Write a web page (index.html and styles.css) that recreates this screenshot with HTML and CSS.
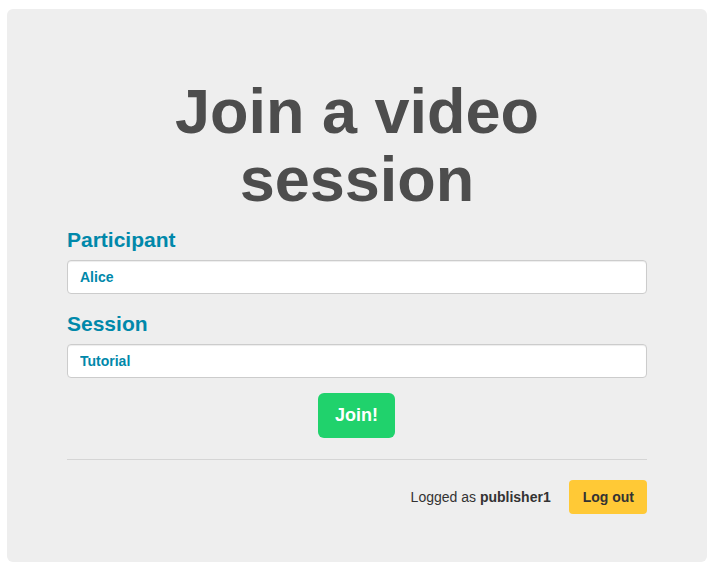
FILE: index.html
```html
<!DOCTYPE html>
<html>
<head>
<meta charset="utf-8">
<link rel="stylesheet" href="styles.css">
</head>
<body>
<div class="page">
  <div class="jumbotron">
    <h1 class="title">Join a video session</h1>
    <form class="form">
      <label class="label">Participant</label>
      <input class="input" type="text" value="Alice">
      <label class="label">Session</label>
      <input class="input" type="text" value="Tutorial">
      <div class="center"><button class="btn-join" type="button">Join!</button></div>
    </form>
    <hr class="rule">
    <div class="logged">
      <span class="logged-text">Logged as <b>publisher1</b></span>
      <button class="btn-logout" type="button">Log out</button>
    </div>
  </div>
</div>
</body>
</html>
```
FILE: styles.css
```css
html, body { margin: 0; padding: 0; background: #fff; }
body { font-family: "Liberation Sans", Arial, sans-serif; font-size: 14px; color: #333; }
.page { padding: 9px 7px 9px 7px; }
.jumbotron {
  background: #eeeeee;
  border-radius: 6px;
  padding: 48px 60px 48px 60px;
  height: 553px;
  box-sizing: border-box;
}
.title {
  margin: 20px 0 0 0;
  font-size: 63px;
  line-height: 68px;
  font-weight: bold;
  text-align: center;
  color: #4d4d4d;
}
.form { display: flex; flex-direction: column; margin: 0; }
.label {
  display: block;
  font-size: 21px;
  line-height: 23px;
  font-weight: bold;
  color: #0088aa;
  margin-top: 15px;
  margin-bottom: 9px;
}
.input + .label { margin-top: 18px; }
.input {
  height: 34px;
  box-sizing: border-box;
  border: 1px solid #cccccc;
  border-radius: 4px;
  background: #fff;
  padding: 0 12px;
  font-family: "Liberation Sans", Arial, sans-serif;
  font-size: 14px;
  font-weight: bold;
  color: #0088aa;
  box-shadow: inset 0 1px 1px rgba(0,0,0,0.075);
  margin: 0;
}
.center { display: flex; justify-content: center; margin-top: 15px; padding-right: 1px; }
.btn-join {
  height: 45px;
  padding: 0 17px;
  border: none;
  border-radius: 6px;
  background: #20d26c;
  color: #fff;
  font-family: "Liberation Sans", Arial, sans-serif;
  font-size: 18px;
  font-weight: bold;
}
.rule {
  border: 0;
  border-top: 1px solid #d5d5d5;
  margin: 21px 0 20px 0;
}
.logged {
  display: flex;
  justify-content: flex-end;
  align-items: center;
  gap: 18px;
}
.logged-text { font-size: 14px; color: #333; }
.btn-logout {
  height: 34px;
  padding: 0 13px 0 14px;
  border: none;
  border-radius: 4px;
  background: #ffc936;
  color: #333;
  font-family: "Liberation Sans", Arial, sans-serif;
  font-size: 14px;
  font-weight: bold;
}
```
